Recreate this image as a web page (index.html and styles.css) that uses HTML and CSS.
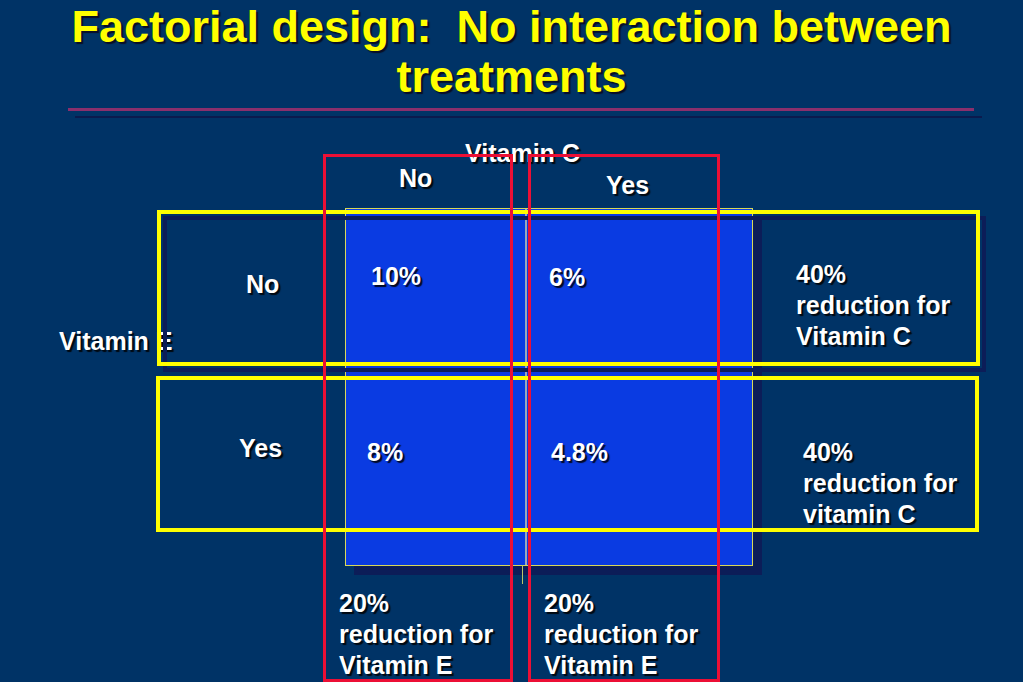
FILE: index.html
```html
<!DOCTYPE html>
<html lang="en">
<head>
<meta charset="utf-8">
<title>Factorial design: No interaction between treatments</title>
<link rel="stylesheet" href="styles.css">
</head>
<body>
<div class="slide">
  <header class="header">
    <h1 class="title">Factorial design:&nbsp; No interaction between<br>treatments</h1>
    <div class="rule rule-accent"></div>
    <div class="rule rule-dark"></div>
  </header>

  <main class="matrix">
    <div class="lbl factor-c">Vitamin C</div>
    <div class="lbl col-no">No</div>
    <div class="lbl col-yes">Yes</div>

    <div class="lbl factor-e">Vitamin E</div>
    <div class="lbl row-no">No</div>
    <div class="lbl row-yes">Yes</div>

    <div class="table">
      <div class="cell c11">10%</div>
      <div class="cell c12">6%</div>
      <div class="cell c21">8%</div>
      <div class="cell c22">4.8%</div>
    </div>

    <div class="lbl note note-r1">40%<br>reduction for<br>Vitamin C</div>
    <div class="lbl note note-r2">40%<br>reduction for<br>vitamin C</div>
    <div class="lbl note note-b1">20%<br>reduction for<br>Vitamin E</div>
    <div class="lbl note note-b2">20%<br>reduction for<br>Vitamin E</div>
  </main>

  <div class="frame frame-y1"></div>
  <div class="frame frame-y2"></div>
  <div class="frame frame-r1"></div>
  <div class="frame frame-r2"></div>
</div>
</body>
</html>
```

FILE: styles.css
```css
html, body {
  margin: 0;
  padding: 0;
  background: #003366;
}

.slide {
  position: relative;
  width: 1023px;
  height: 682px;
  overflow: hidden;
  background: #003366;
  font-family: "Liberation Sans", Arial, sans-serif;
  font-weight: bold;
  color: #ffffff;
}

/* ---------- header ---------- */
.header {
  height: 118px;
  padding-top: 2px;
  box-sizing: border-box;
}

.title {
  margin: 0;
  font-size: 45px;
  line-height: 50px;
  font-weight: bold;
  color: #ffff00;
  text-align: center;
  text-shadow: 2px 2px 1px rgba(10, 10, 30, 0.9);
}

.rule {
  height: 2px;
}

.rule-accent {
  margin: 6px 0 0 68px;
  width: 906px;
  height: 3px;
  background: #8a2f6c;
}

.rule-dark {
  margin: 5px 0 0 75px;
  width: 907px;
  background: #0b1a4e;
}

/* ---------- matrix ---------- */
.matrix {
  display: grid;
  grid-template-columns: 157px 188px 180px 228px 270px;
  grid-template-rows: 45px 45px 162px 196px 116px;
}

.lbl {
  font-size: 25px;
  line-height: 31px;
  white-space: nowrap;
  text-shadow: 2px 2px 1px rgba(0, 0, 0, 0.85);
}

.factor-c { grid-column: 3 / 5; grid-row: 1; padding: 20px 0 0 120px; }
.col-no   { grid-column: 3; grid-row: 2; padding: 0 0 0 54px; }
.col-yes  { grid-column: 4; grid-row: 2; padding: 7px 0 0 81px; }

.factor-e { grid-column: 1; grid-row: 3; padding: 118px 0 0 59px; }
.row-no   { grid-column: 2; grid-row: 3; padding: 61px 0 0 89px; }
.row-yes  { grid-column: 2; grid-row: 4; padding: 63px 0 0 82px; }

.note-r1  { grid-column: 5; grid-row: 3; padding: 51px 0 0 43px; }
.note-r2  { grid-column: 5; grid-row: 4; padding: 67px 0 0 50px; }
.note-b1  { grid-column: 2 / 4; grid-row: 5; padding: 22px 0 0 182px; }
.note-b2  { grid-column: 4; grid-row: 5; padding: 22px 0 0 19px; }

/* ---------- blue 2x2 table ---------- */
.table {
  grid-column: 3 / 5;
  grid-row: 3 / 5;
  position: relative;
  box-sizing: border-box;
  width: 408px;
  height: 358px;
  display: grid;
  grid-template-columns: 179px 1fr;
  grid-template-rows: 160px 1fr;
  background: #0a3be2;
  border: 1px solid #d8d85a;
  box-shadow: 9px 9px 0 #0c1d58;
}

.table::after {
  content: "";
  position: absolute;
  left: 176px;
  top: 100%;
  width: 1px;
  height: 19px;
  background: #b8c86a;
}

.cell {
  font-size: 25px;
  line-height: 31px;
  text-shadow: 2px 2px 1px rgba(0, 0, 0, 0.85);
}

.c11 { padding: 52px 0 0 25px; }
.c12 { padding: 53px 0 0 22px; border-left: 2px solid #9aa8bc; }
.c21 { padding: 67px 0 0 21px; border-top: 1px solid #a8b8e0; }
.c22 { padding: 67px 0 0 24px; border-top: 1px solid #a8b8e0; border-left: 2px solid #9aa8bc; }

/* ---------- overlay frames ---------- */
.frame {
  position: absolute;
  box-sizing: border-box;
  pointer-events: none;
}

.frame-y1 {
  left: 157px;
  top: 210px;
  width: 823px;
  height: 156px;
  border: 4px solid #ffff00;
  filter: drop-shadow(6px 6px 0 #0c1d58);
}

.frame-y2 {
  left: 156px;
  top: 376px;
  width: 823px;
  height: 156px;
  border: 4px solid #ffff00;
}

.frame-r1,
.frame-r2 {
  top: 154px;
  height: 528px;
  border: 3px solid #ec0f35;
}

.frame-r1 { left: 323px; width: 190px; }
.frame-r2 { left: 528px; width: 192px; }
```
